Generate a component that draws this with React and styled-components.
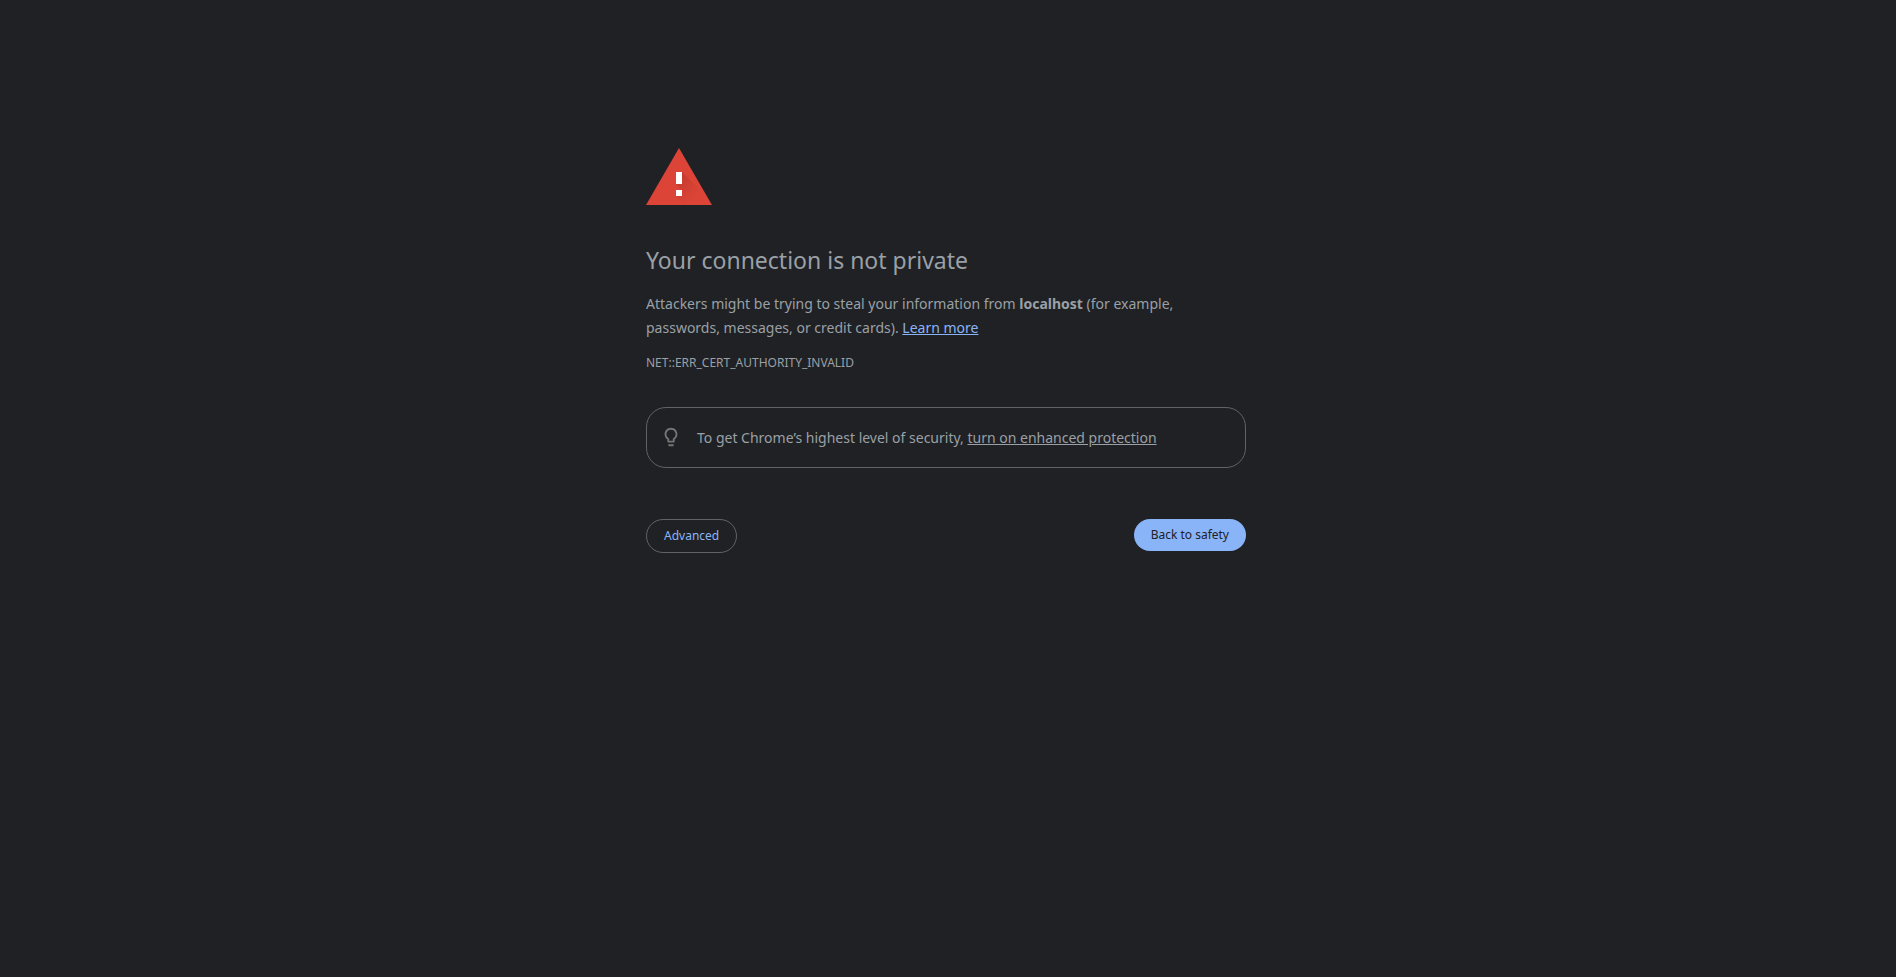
import React from "react";
import styled, { createGlobalStyle } from "styled-components";

const GlobalStyle = createGlobalStyle`
  * {
    box-sizing: border-box;
  }
  body {
    margin: 0;
    padding-right: 4px;
    background: #202124;
    color: #9aa0a6;
    font-family: "Noto Sans", sans-serif;
    font-size: 14px;
    line-height: 24px;
  }
`;

/**
 * Icons
 */
const WarningIcon = () => (
  <svg width="66" height="57" viewBox="0 0 66 57" aria-hidden="true">
    <defs>
      <linearGradient id="shade" gradientUnits="userSpaceOnUse" x1="30" y1="26" x2="50" y2="46">
        <stop offset="0" stopColor="#7f1d14" stopOpacity="0.28" />
        <stop offset="1" stopColor="#7f1d14" stopOpacity="0" />
      </linearGradient>
    </defs>
    <path d="M0 57h66L33 0z" fill="#db4437" />
    <path d="M36 24l17 17 9 16H39l-9-9 6-6-6-6z" fill="url(#shade)" />
    <path d="M36 48h-6v-6h6zM36 36h-6V24h6z" fill="#fff" />
  </svg>
);

const BulbIcon = () => (
  <svg width="22" height="22" viewBox="0 0 24 24" fill="#757575" aria-hidden="true">
    <path d="M9 21c0 .5.4 1 1 1h4c.6 0 1-.5 1-1v-1H9v1zm3-19C8.100 2 5 5.100 5 9c0 2.400 1.200 4.500 3 5.700V17c0 .5.4 1 1 1h6c.6 0 1-.5 1-1v-2.300c1.800-1.300 3-3.400 3-5.700 0-3.900-3.100-7-7-7zm2.900 11.100l-.9.600V16h-4v-2.300l-.9-.6C7.800 12.200 7 10.600 7 9c0-2.800 2.200-5 5-5s5 2.200 5 5c0 1.600-.8 3.200-2.100 4.100z" />
  </svg>
);

/**
 * Component definition
 */
const App = () => (
  <>
    <GlobalStyle />
    <Page>
      <WarningIcon />
      <Title>Your connection is not private</Title>
      <Message>
        Attackers might be trying to steal your information from{" "}
        <strong>localhost</strong> (for example, passwords, messages, or credit
        cards). <TextLink href="#learn-more" $color="#8ab4f8">Learn more</TextLink>
      </Message>
      <ErrorCode>NET::ERR_CERT_AUTHORITY_INVALID</ErrorCode>
      <Promo>
        <BulbIcon />
        <p>
          To get Chrome’s highest level of security,{" "}
          <TextLink href="#enhanced-protection">turn on enhanced protection</TextLink>
        </p>
      </Promo>
      <Actions>
        <Button type="button">Advanced</Button>
        <Button type="button" $primary>Back to safety</Button>
      </Actions>
    </Page>
  </>
);

export default App;

/**
 * Component styles
 */
const Page = styled.main`
  width: 100%;
  max-width: 600px;
  margin: 0 auto;
  padding-top: 148px;
  svg {
    display: block;
    flex-shrink: 0;
  }
`;

const Title = styled.h1`
  margin: 39px 0 16px;
  font-size: 23px;
  font-weight: normal;
  line-height: 32px;
`;

const Message = styled.p`
  margin: 0 0 11px;
`;

const ErrorCode = styled.div`
  font-size: 12px;
`;

const TextLink = styled.a`
  color: ${({ $color }) => $color || "inherit"};
  text-decoration: underline;
`;

const Promo = styled.section`
  display: flex;
  align-items: flex-start;
  gap: 15px;
  margin-top: 32px;
  padding: 18px 13px 17px;
  border: 1px solid #5f6368;
  border-radius: 20px;
  p {
    margin: 0;
  }
`;

const Actions = styled.div`
  display: flex;
  align-items: flex-start;
  justify-content: space-between;
  margin-top: 51px;
`;

const Button = styled.button`
  padding: 8px 17px;
  border: ${({ $primary }) => ($primary ? "0" : "1px solid #5f6368")};
  border-radius: 20px;
  background: ${({ $primary }) => ($primary ? "#8ab4f8" : "transparent")};
  color: ${({ $primary }) => ($primary ? "#202124" : "#8ab4f8")};
  font-family: inherit;
  font-size: 12px;
  line-height: 16px;
  cursor: pointer;
`;
